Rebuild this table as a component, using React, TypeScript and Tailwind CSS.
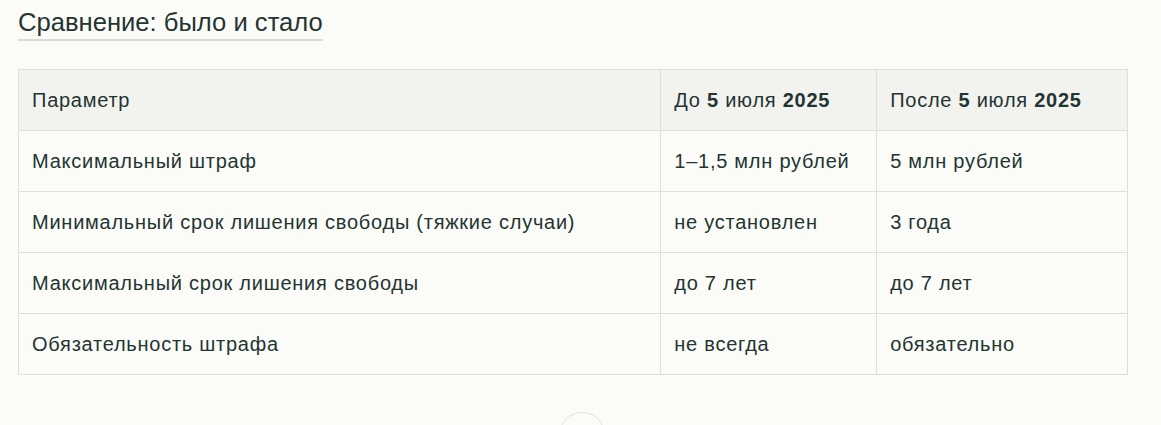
const rows: [string, string, string][] = [
  ["Максимальный штраф", "1–1,5 млн рублей", "5 млн рублей"],
  ["Минимальный срок лишения свободы (тяжкие случаи)", "не установлен", "3 года"],
  ["Максимальный срок лишения свободы", "до 7 лет", "до 7 лет"],
  ["Обязательность штрафа", "не всегда", "обязательно"],
];

export default function App() {
  return (
    <div
      className="h-[425px] bg-[#fbfcf8] text-[#243432] overflow-hidden"
      style={{ fontFamily: '"Liberation Sans", Arial, sans-serif' }}
    >
      <div className="pl-[18px] pt-[7px]">
        <h2 className="inline-block text-[25.6px] leading-[30px] font-normal border-b-2 border-[#d9dbd6] pb-[2px]">
          Сравнение: было и стало
        </h2>
      </div>

      <div className="mx-[18px] mt-[28px] w-[1110px]">
        <table className="w-full border-collapse text-[20px] leading-[24px] tracking-[0.75px]">
          <colgroup>
            <col className="w-[643px]" />
            <col className="w-[216px]" />
            <col className="w-[251px]" />
          </colgroup>
          <thead>
            <tr className="bg-[#f2f3ef]">
              <th className="h-[61px] border border-[#dedfdb] px-[13px] text-left font-normal">Параметр</th>
              <th className="h-[61px] border border-[#dedfdb] px-[13px] text-left font-normal">
                До <b className="font-semibold">5</b> июля <b className="font-semibold">2025</b>
              </th>
              <th className="h-[61px] border border-[#dedfdb] px-[13px] text-left font-normal">
                После <b className="font-semibold">5</b> июля <b className="font-semibold">2025</b>
              </th>
            </tr>
          </thead>
          <tbody>
            {rows.map((r) => (
              <tr key={r[0]}>
                {r.map((c, i) => (
                  <td key={i} className="h-[61px] border border-[#dedfdb] px-[13px]">
                    {c}
                  </td>
                ))}
              </tr>
            ))}
          </tbody>
        </table>
      </div>

      <div className="flex justify-center mt-[37px] w-[1164px]">
        <div className="w-[46px] h-[46px] shrink-0 rounded-full border border-[#e3e4e0] bg-[#fbfcf8]" />
      </div>
    </div>
  );
}
